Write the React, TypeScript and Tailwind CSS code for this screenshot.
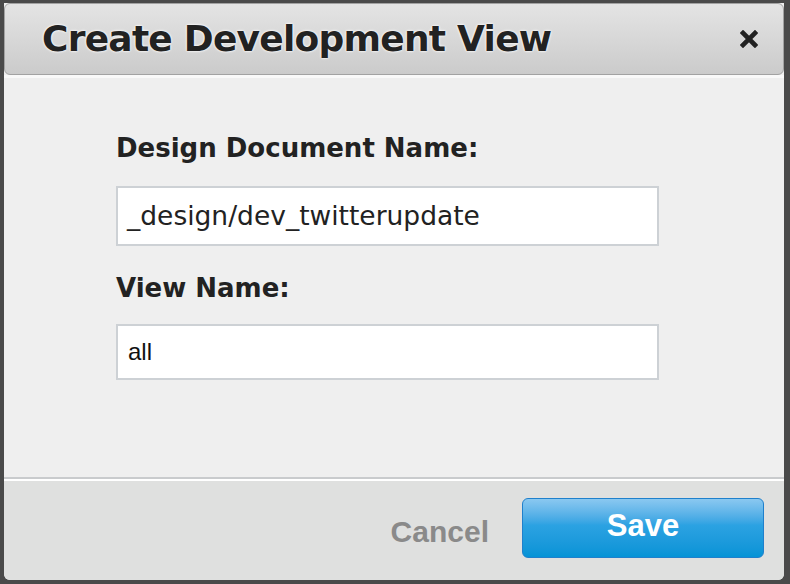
export default function App() {
  return (
    <div className="w-[790px] h-[584px] bg-[#4a4a4a] pt-[3px] pl-[4px] pr-[6px] pb-[4px] overflow-hidden">
      <div className="h-full flex flex-col bg-[#efefef] rounded-b-[6px] overflow-hidden">
        {/* header */}
        <div className="h-[72px] shrink-0 rounded-[6px] border border-[#a2a2a2] bg-gradient-to-b from-[#e4e4e4] to-[#cbcbcb] flex items-center justify-between pl-[37px] pr-[25px]">
          <h1
            className="text-[36px] font-bold text-[#222] tracking-[-0.75px] [text-shadow:0_0_3px_#fff,0_0_2px_#fff] whitespace-nowrap"
            style={{ fontFamily: '"DejaVu Sans", Verdana, sans-serif' }}
          >
            Create Development View
          </h1>
          <svg width="18" height="18" viewBox="0 0 18 18" className="mb-[1px]">
            <path d="M3 3 L15 15 M15 3 L3 15" stroke="#222" strokeWidth="4.6" strokeLinecap="square" />
          </svg>
        </div>
        <div className="h-[3px] bg-[#f9f9f9] shrink-0" />

        {/* body */}
        <div className="flex-1 pl-[112px] pt-[55px]" style={{ fontFamily: '"DejaVu Sans", Verdana, sans-serif' }}>
          <label className="block text-[26px] font-bold text-[#222] leading-[30px]">Design Document Name:</label>
          <div className="mt-[23px] w-[543px] h-[60px] bg-white border-2 border-[#cdd1d5] flex items-center pl-[9px] text-[26.5px] text-[#222]">
            _design/dev_twitterupdate
          </div>
          <label className="block mt-[27px] text-[26px] font-bold text-[#222] leading-[30px]">View Name:</label>
          <div
            className="mt-[21px] w-[543px] h-[56px] bg-white border-2 border-[#cdd1d5] flex items-center pl-[10px] text-[24px] text-[#111]"
            style={{ fontFamily: '"Liberation Sans", Arial, sans-serif' }}
          >
            all
          </div>
        </div>

        {/* footer */}
        <div className="h-[103px] shrink-0 border-t-2 border-[#c9cbcd] bg-[#dfe0df] flex flex-col">
          <div className="h-[2px] bg-white" />
          <div
            className="flex-1 flex items-center justify-end pr-[20px] gap-[33px]"
            style={{ fontFamily: '"Liberation Sans", Arial, sans-serif' }}
          >
            <span className="text-[30px] font-bold text-[#8a8a8a] mt-[2px]">Cancel</span>
            <button className="w-[242px] h-[60px] rounded-[6px] border border-[#1f80cc] bg-gradient-to-b from-[#8ac8f0] via-[#2ba2e2] via-45% to-[#0493d6] text-white text-[31px] font-bold pb-[3px] mb-[5px]">
              Save
            </button>
          </div>
        </div>
      </div>
    </div>
  );
}
